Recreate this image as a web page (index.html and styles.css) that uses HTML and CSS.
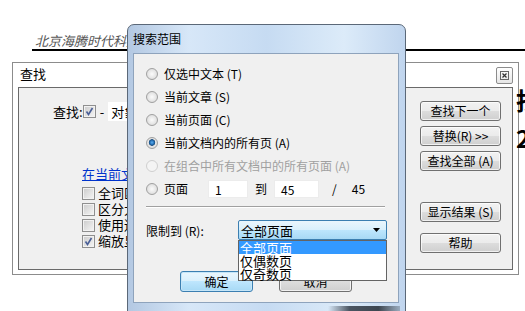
FILE: index.html
```html
<!DOCTYPE html>
<html lang="zh">
<head>
    <meta charset="UTF-8">
    <title>搜索范围</title>
    <link rel="stylesheet" href="styles.css">
</head>
<body>
    <!-- 背后的文档 -->
    <div class="doc-head">北京海腾时代科技有限公司</div>
    <div class="doc-big">
        <span>找</span>
        <span>2</span>
    </div>

    <!-- 查找对话框 -->
    <div class="find-win">
        <div class="find-title">查找</div>
        <button class="close-btn">
            <svg width="9" height="9" viewBox="0 0 9 9"><rect x="0.5" y="0.5" width="8" height="8" fill="none" stroke="#666"/><path d="M2.5 2.5 L6.5 6.5 M6.5 2.5 L2.5 6.5" stroke="#333" stroke-width="1.2"/></svg>
        </button>
        <div class="find-panel">
            <div class="find-left">
                <div class="find-row">
                    <span>查找:</span>
                    <span class="chk checked"><svg width="9" height="9" viewBox="0 0 9 9"><path d="M1.5 4.5 L3.5 7.5 L7.5 1" fill="none" stroke="#4a5f97" stroke-width="1.6"/></svg></span>
                    <span class="dash">-</span>
                    <span class="field">对象</span>
                </div>
                <a class="scope-link" href="#">在当前文档中查找</a>
                <div class="opts">
                    <div class="opt"><span class="chk"></span>全词匹配</div>
                    <div class="opt"><span class="chk"></span>区分大小写</div>
                    <div class="opt"><span class="chk"></span>使用通配符</div>
                    <div class="opt"><span class="chk checked"><svg width="9" height="9" viewBox="0 0 9 9"><path d="M1.5 4.5 L3.5 7.5 L7.5 1" fill="none" stroke="#4a5f97" stroke-width="1.6"/></svg></span>缩放显示</div>
                </div>
            </div>
            <div class="find-btns">
                <button class="btn">查找下一个</button>
                <button class="btn">替换(R) &gt;&gt;</button>
                <button class="btn">查找全部 (A)</button>
                <button class="btn btn-gap">显示结果 (S)</button>
                <button class="btn btn-last">帮助</button>
            </div>
        </div>
    </div>

    <!-- 搜索范围对话框 -->
    <div class="range-win">
        <div class="range-title">搜索范围</div>
        <div class="range-client">
            <div class="radio-row"><span class="radio"></span>仅选中文本 (T)</div>
            <div class="radio-row"><span class="radio"></span>当前文章 (S)</div>
            <div class="radio-row"><span class="radio"></span>当前页面 (C)</div>
            <div class="radio-row"><span class="radio on"></span>当前文档内的所有页 (A)</div>
            <div class="radio-row disabled"><span class="radio"></span>在组合中所有文档中的所有页面 (A)</div>
            <div class="radio-row">
                <span class="radio"></span>
                <span class="page-lbl">页面</span>
                <span class="num-box">1</span>
                <span class="to">到</span>
                <span class="num-box wide">45</span>
                <span class="slash">/</span>
                <span>45</span>
            </div>
            <div class="sep"></div>
            <div class="limit-row">
                <span class="limit-lbl">限制到 (R):</span>
                <div class="select">
                    <span>全部页面</span>
                    <svg width="7" height="4" viewBox="0 0 7 4"><path d="M0 0 H7 L3.5 4 Z" fill="#000"/></svg>
                    <div class="select-list">
                        <div class="item active">全部页面</div>
                        <div class="item">仅偶数页</div>
                        <div class="item">仅奇数页</div>
                    </div>
                </div>
            </div>
            <div class="dlg-btns">
                <button class="btn btn-ok">确定</button>
                <button class="btn btn-dlg">取消</button>
            </div>
        </div>
        <div class="frame-shade"></div>
    </div>
</body>
</html>
```

FILE: styles.css
```css
html, body {
    margin: 0;
    padding: 0;
    background: #fff;
}
body {
    width: 525px;
    height: 311px;
    overflow: hidden;
    position: relative;
    font-family: "Noto Sans CJK SC", sans-serif;
    font-size: 12px;
    color: #000;
}
button {
    font-family: inherit;
    color: #000;
}
/* 文档页眉 */
.doc-head {
    margin-left: 32px;
    padding: 33px 0 0 3px;
    line-height: 16px;
    font-size: 13px;
    font-style: italic;
    color: #555;
    border-bottom: 2px solid #000;
}
.doc-big {
    position: absolute;
    left: 516px;
    top: 86px;
    z-index: 2;
    display: flex;
    flex-direction: column;
    gap: 10px;
    font-size: 24px;
    font-weight: bold;
    line-height: 28px;
}
/* 查找对话框 */
.find-win {
    position: absolute;
    left: 12px;
    top: 62px;
    width: 507px;
    height: 213px;
    box-sizing: border-box;
    border: 1px solid #8c8c8c;
    background: #fff;
    display: flex;
    flex-direction: column;
}
.find-title {
    height: 24px;
    line-height: 21px;
    padding-left: 7px;
    font-size: 13px;
}
.close-btn {
    position: absolute;
    right: 5px;
    top: 4px;
    width: 17px;
    height: 17px;
    padding: 0;
    border: 1px solid #8c8c8c;
    border-radius: 2px;
    background: linear-gradient(#fff, #e6e6e6);
    display: flex;
    align-items: center;
    justify-content: center;
}
.find-panel {
    flex: 1;
    margin: 0 5px 4px 5px;
    border: 1px solid #6a6a6a;
    background: #f0f0f0;
    display: flex;
    justify-content: space-between;
}
.find-left {
    padding-top: 14px;
    font-size: 13px;
}
.find-row {
    display: flex;
    align-items: center;
    height: 19px;
    padding-left: 34px;
}
.chk {
    width: 13px;
    height: 13px;
    box-sizing: border-box;
    border: 1px solid #8f8f8f;
    background: linear-gradient(135deg, #cbcbcb, #f6f6f6);
    box-shadow: inset 0 0 0 1px #f2f2f2;
    display: inline-flex;
    align-items: center;
    justify-content: center;
    flex-shrink: 0;
}
.dash {
    margin: 0 4px 0 4px;
}
.field {
    width: 120px;
    height: 19px;
    line-height: 19px;
    padding-left: 3px;
    background: #fff;
}
.scope-link {
    display: block;
    margin: 46px 0 0 63px;
    line-height: 14px;
    color: #0033cc;
    text-decoration: underline;
}
.opts {
    margin: 4px 0 0 63px;
}
.opt {
    display: flex;
    align-items: center;
    gap: 3px;
    height: 16px;
    line-height: 16px;
}
.find-btns {
    width: 81px;
    margin-right: 11px;
    padding-top: 13px;
    display: flex;
    flex-direction: column;
    gap: 5px;
}
.btn {
    width: 81px;
    height: 20px;
    padding: 0;
    font-size: 12px;
    line-height: 18px;
    border: 1px solid #707070;
    border-radius: 3px;
    background: linear-gradient(#f2f2f2 0%, #ebebeb 49%, #dddddd 50%, #cfcfcf 100%);
    box-shadow: inset 0 0 0 1px rgba(255, 255, 255, 0.7);
}
.btn-gap {
    margin-top: 26px;
}
.btn-last {
    margin-top: 6px;
}
/* 搜索范围对话框 */
.range-win {
    position: absolute;
    left: 127px;
    top: 24px;
    width: 279px;
    height: 292px;
    box-sizing: border-box;
    border: 1px solid #5b6878;
    border-radius: 7px 7px 0 0;
    background: linear-gradient(90deg, #b3c8e2 0%, #d7e7f8 22%, #c6dbf2 50%, #dcebf9 78%, #c0d5ee 100%);
    z-index: 3;
}
.range-title {
    height: 28px;
    line-height: 28px;
    padding-left: 5px;
}
.range-client {
    height: 250px;
    margin: 0 6px 0 5px;
    box-sizing: border-box;
    border: 1px solid #8ea3bc;
    background: #f0f0f0;
    padding: 8px 0 0 12px;
}
.frame-shade {
    position: absolute;
    left: 200px;
    top: 281px;
    width: 72px;
    height: 10px;
    background: linear-gradient(90deg, rgba(60, 70, 80, 0), #4a5562 30%, #3d4650 70%, rgba(60, 70, 80, 0.3));
}
.radio-row {
    display: flex;
    align-items: center;
    height: 23px;
    gap: 6px;
}
.radio-row.disabled {
    color: #a0a0a0;
}
.radio {
    width: 12px;
    height: 12px;
    box-sizing: border-box;
    border-radius: 50%;
    border: 1px solid #a0a0a0;
    background: radial-gradient(circle at 50% 50%, #fbfbfb 0%, #e4e4e4 60%, #d0d0d0 100%);
    flex-shrink: 0;
}
.radio.on {
    background: radial-gradient(circle at 50% 45%, #5fb0f0 0%, #2a76bc 25%, #1c4f80 40%, #e6e6e6 48%, #d6d6d6 100%);
}
.disabled .radio {
    border-color: #cfcfcf;
    background: #f4f4f4;
}
.page-lbl {
    width: 38px;
}
.num-box {
    width: 40px;
    height: 18px;
    line-height: 18px;
    box-sizing: border-box;
    padding-left: 6px;
    background: #fff;
    border: 1px solid #ececec;
}
.num-box.wide {
    width: 45px;
}
.to {
    margin: 0 1px;
}
.slash {
    margin: 0 9px 0 7px;
}
.sep {
    height: 1px;
    margin: 6px 13px 0 0;
    background: #a0a0a0;
    border-bottom: 1px solid #fff;
}
.limit-row {
    display: flex;
    align-items: center;
    margin-top: 12px;
    height: 20px;
}
.limit-lbl {
    width: 92px;
}
.select {
    position: relative;
    width: 149px;
    height: 20px;
    box-sizing: border-box;
    border: 1px solid #3c7fb1;
    border-radius: 2px;
    background: linear-gradient(#eaf6fd 0%, #d9f0fc 49%, #bee6fd 50%, #a7d9f5 100%);
    display: flex;
    align-items: center;
    justify-content: space-between;
    padding: 0 6px 0 2px;
    font-size: 13px;
}
.select-list {
    position: absolute;
    left: -1px;
    top: 19px;
    width: 149px;
    box-sizing: border-box;
    border: 1px solid #646464;
    background: #fff;
    z-index: 4;
}
.item {
    height: 13px;
    line-height: 13px;
    font-size: 13px;
    padding-left: 1px;
}
.item.active {
    background: #3399ff;
    color: #fff;
}
.dlg-btns {
    display: flex;
    gap: 26px;
    margin-top: 31px;
    padding-left: 34px;
}
.btn-dlg {
    width: 73px;
    height: 21px;
}
.btn-ok {
    width: 73px;
    height: 21px;
    border-color: #3c7fb1;
    background: linear-gradient(#eaf6fd 0%, #d9f0fc 49%, #bee6fd 50%, #a7d9f5 100%);
    box-shadow: inset 0 0 0 1px #c6e6f8;
}
```
